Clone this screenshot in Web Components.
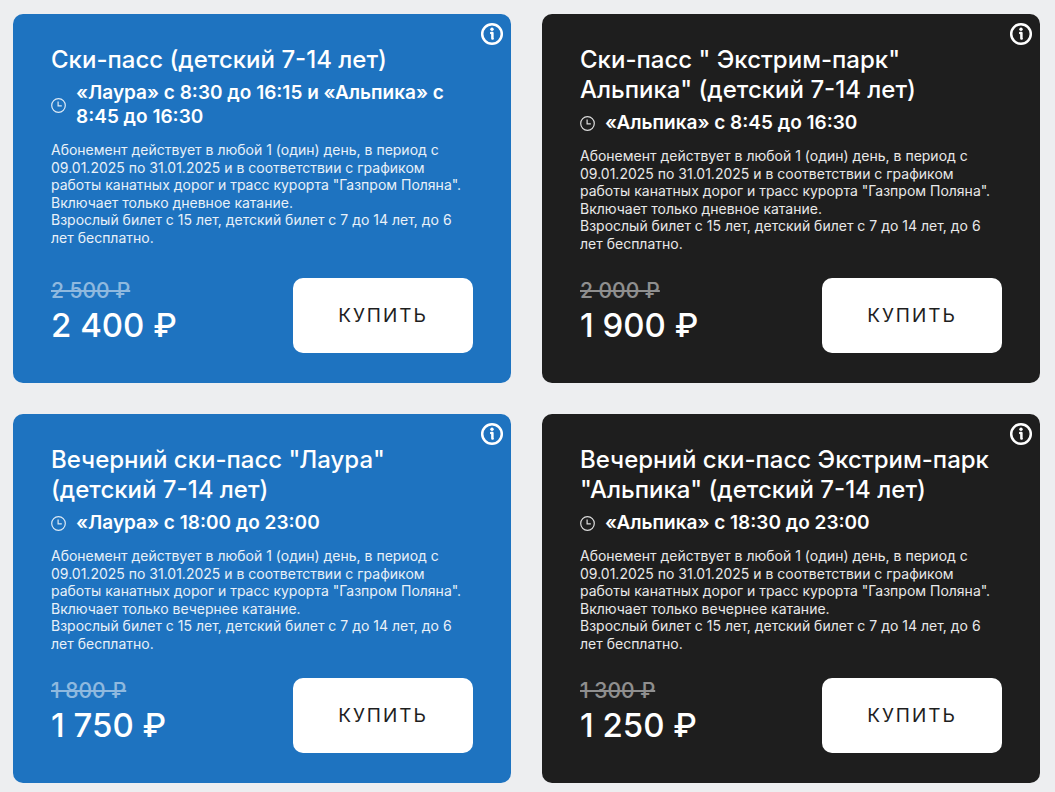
<!DOCTYPE html>
<html lang="ru">
<head>
<meta charset="utf-8">
<title>Ски-пассы</title>
<style>
body { margin: 0; background: #edeef0; font-family: Inter, "Noto Sans", sans-serif; color: #fff; }
</style>
</head>
<body>
<pass-grid>
  <pass-card>
    <span slot="title">Ски-пасс (детский 7-14 лет)</span>
    <pass-hours slot="hours">«Лаура» с 8:30 до 16:15 и «Альпика» с 8:45 до 16:30</pass-hours>
    <span>Абонемент действует в любой 1 (один) день, в период с<br>09.01.2025 по 31.01.2025 и в соответствии с графиком<br>работы канатных дорог и трасс курорта "Газпром Поляна".<br>Включает только дневное катание.<br>Взрослый билет с 15 лет, детский билет с 7 до 14 лет, до 6<br>лет бесплатно.</span>
    <pass-price slot="price"><span slot="old">2 500 ₽</span>2 400 ₽</pass-price>
  </pass-card>
  <pass-card theme="dark">
    <span slot="title">Ски-пасс " Экстрим-парк"<br>Альпика" (детский 7-14 лет)</span>
    <pass-hours slot="hours">«Альпика» с 8:45 до 16:30</pass-hours>
    <span>Абонемент действует в любой 1 (один) день, в период с<br>09.01.2025 по 31.01.2025 и в соответствии с графиком<br>работы канатных дорог и трасс курорта "Газпром Поляна".<br>Включает только дневное катание.<br>Взрослый билет с 15 лет, детский билет с 7 до 14 лет, до 6<br>лет бесплатно.</span>
    <pass-price slot="price"><span slot="old">2 000 ₽</span>1 900 ₽</pass-price>
  </pass-card>
  <pass-card>
    <span slot="title">Вечерний ски-пасс "Лаура"<br>(детский 7-14 лет)</span>
    <pass-hours slot="hours">«Лаура» с 18:00 до 23:00</pass-hours>
    <span>Абонемент действует в любой 1 (один) день, в период с<br>09.01.2025 по 31.01.2025 и в соответствии с графиком<br>работы канатных дорог и трасс курорта "Газпром Поляна".<br>Включает только вечернее катание.<br>Взрослый билет с 15 лет, детский билет с 7 до 14 лет, до 6<br>лет бесплатно.</span>
    <pass-price slot="price"><span slot="old">1 800 ₽</span>1 750 ₽</pass-price>
  </pass-card>
  <pass-card theme="dark">
    <span slot="title">Вечерний ски-пасс Экстрим-парк<br>"Альпика" (детский 7-14 лет)</span>
    <pass-hours slot="hours">«Альпика» с 18:30 до 23:00</pass-hours>
    <span>Абонемент действует в любой 1 (один) день, в период с<br>09.01.2025 по 31.01.2025 и в соответствии с графиком<br>работы канатных дорог и трасс курорта "Газпром Поляна".<br>Включает только вечернее катание.<br>Взрослый билет с 15 лет, детский билет с 7 до 14 лет, до 6<br>лет бесплатно.</span>
    <pass-price slot="price"><span slot="old">1 300 ₽</span>1 250 ₽</pass-price>
  </pass-card>
</pass-grid>

<script>
function define(name, html) {
  const template = document.createElement('template');
  template.innerHTML = html;
  customElements.define(name, class extends HTMLElement {
    constructor() {
      super();
      this.attachShadow({ mode: 'open' }).append(template.content.cloneNode(true));
    }
  });
}

define('pass-grid', `
<style>
  :host { display: grid; grid-template-columns: repeat(auto-fit, minmax(400px, 1fr)); gap: 31px; padding: 14px 15px 9px 13px; }
</style>
<slot></slot>`);

define('pass-card', `
<style>
  :host { display: flex; flex-direction: column; position: relative; box-sizing: border-box; padding: 31px 38px 30px; border-radius: 10px; background: #1e73c0; }
  :host([theme="dark"]) { background: #1e1e1e; }
  h2 { margin: 0 0 6px; font-size: 24px; font-weight: 500; line-height: 30px; }
  p { margin: 12px 0 26px; font-size: 14px; font-weight: 400; line-height: 1.25; opacity: .9; }
  footer { display: flex; justify-content: space-between; margin-top: auto; }
  info-button { position: absolute; top: 8px; right: 7px; }
</style>
<info-button></info-button>
<h2><slot name="title"></slot></h2>
<slot name="hours"></slot>
<p><slot></slot></p>
<footer><slot name="price"></slot><buy-button>Купить</buy-button></footer>`);

define('info-button', `
<style>
  :host { display: block; }
  button { display: block; width: 24px; height: 24px; padding: 0; border: 0; background: none; color: #fff; cursor: pointer; }
  svg { display: block; }
</style>
<button type="button" aria-label="Подробнее">
  <svg width="24" height="24" viewBox="0 0 24 24" fill="none" stroke="currentColor" aria-hidden="true">
    <circle cx="12" cy="12" r="9.8" stroke-width="2.5"/>
    <circle cx="12" cy="7.2" r="1.7" fill="currentColor" stroke="none"/>
    <path d="M11.2 11.1h1.2v5.4h.3" stroke-width="2.5" stroke-linecap="round" stroke-linejoin="round"/>
  </svg>
</button>`);

define('pass-hours', `
<style>
  :host { display: flex; align-items: center; gap: 10px; font-size: 19px; font-weight: 600; line-height: 24px; }
  svg { flex: none; }
</style>
<svg width="15" height="15" viewBox="0 0 15 15" fill="none" stroke="#fff" stroke-opacity=".85" aria-hidden="true">
  <circle cx="7.5" cy="7.5" r="6.8" stroke-width="1.2"/>
  <path d="M7.1 3.6v4.3h3.7" stroke-width="1.2"/>
</svg>
<span><slot></slot></span>`);

define('pass-price', `
<style>
  :host { display: flex; flex-direction: column; font-size: 33px; font-weight: 500; line-height: 44px; white-space: nowrap; }
  del { font-size: 21px; line-height: 25px; opacity: .5; }
</style>
<del><slot name="old"></slot></del>
<span><slot></slot></span>`);

define('buy-button', `
<style>
  :host { display: block; }
  button { width: 180px; height: 75px; padding: 0; border: 0; border-radius: 10px; background: #fff; color: #1e1e1e; font: inherit; font-size: 19px; letter-spacing: 2px; text-transform: uppercase; cursor: pointer; }
</style>
<button type="button"><slot></slot></button>`);
</script>
</body>
</html>
